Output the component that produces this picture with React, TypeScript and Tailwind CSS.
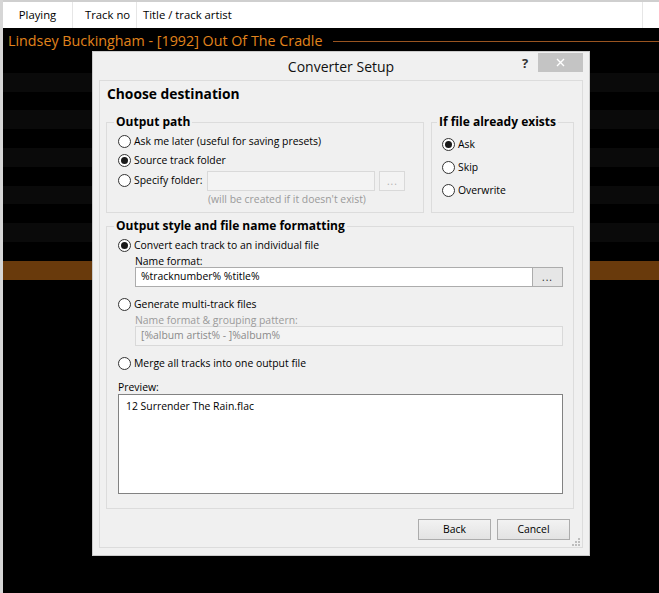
import React from 'react';

const rows = Array.from({ length: 29 }, (_, i) => i);

type RadioProps = { checked?: boolean; label: string; className?: string };

const Radio: React.FC<RadioProps> = ({ checked = false, label, className = '' }) => {
  return (
    <div className={'flex items-center ' + className}>
      <span className="flex h-[13px] w-[13px] shrink-0 items-center justify-center rounded-full border border-[#333333] bg-white">
        {checked && <span className="h-[7px] w-[7px] rounded-full bg-[#1a1a1a]" />}
      </span>
      <span className="ml-[3px] whitespace-nowrap">{label}</span>
    </div>
  );
};

const Dots: React.FC<{ disabled?: boolean }> = ({ disabled = false }) => (
  <span className={'text-[10px] leading-none tracking-[1px] ' + (disabled ? 'text-[#b0b0b0]' : 'text-[#222]')}>...</span>
);

const App: React.FC = () => {
  return (
    <div className="relative flex h-[593px] w-[659px] overflow-hidden bg-black font-['Open_Sans',sans-serif] text-black">
      {/* left window edge */}
      <div className="w-[3px] shrink-0 bg-[#d6d6d6]" />

      <div className="flex min-w-0 flex-1 flex-col">
        {/* playlist header */}
        <div className="flex h-[28px] shrink-0 border-t-2 border-[#cfcfcf] bg-white text-[11.3px]">
          <div className="flex w-[70px] items-center justify-center border-r border-[#e6e6e6]">Playing</div>
          <div className="flex w-[64px] items-center border-r border-[#e6e6e6] pl-[12px]">Track no</div>
          <div className="flex w-[506px] items-center border-r border-[#e6e6e6] pl-[6px]">Title / track artist</div>
          <div className="flex-1" />
        </div>

        {/* group title */}
        <div className="flex h-[26px] shrink-0 items-center">
          <span className="whitespace-nowrap pl-[5px] text-[14.3px] text-[#e2841c]">
            Lindsey Buckingham - [1992] Out Of The Cradle
          </span>
          <span className="ml-[11px] h-px flex-1 bg-[#9a5420]" />
        </div>

        {/* track rows */}
        {rows.map((i) => (
          <div
            key={i}
            className={
              'h-[18.8px] shrink-0 ' +
              (i === 11 ? 'bg-[#693a0c]' : i < 11 && i % 2 === 1 ? 'bg-[#0a0a0a]' : 'bg-black')
            }
          />
        ))}
      </div>

      {/* Converter Setup dialog */}
      <div className="absolute left-[92px] top-[51px] flex h-[505px] w-[498px] flex-col border border-[#cbcbcb] bg-[#f0f0f0] text-[10.4px]">
        {/* title bar */}
        <div className="flex h-[28px] shrink-0 items-start">
          <div className="w-[67px]" />
          <div className="flex-1 pt-[5px] text-center text-[14px] leading-[20px] text-[#111]">Converter Setup</div>
          <div className="flex w-[67px] items-start">
            <span className="mt-[3px] w-[16px] text-[13px] font-bold leading-[16px] text-[#333]">?</span>
            <div className="mt-[1px] flex h-[19px] w-[45px] items-center justify-center bg-[#c4c4c4]">
              <svg width="9" height="9" viewBox="0 0 9 9">
                <path d="M1 1 L8 8 M8 1 L1 8" stroke="#ffffff" strokeWidth="1.4" />
              </svg>
            </div>
          </div>
        </div>

        {/* client area */}
        <div className="relative ml-[6px] flex h-[468px] w-[484px] flex-col border border-[#dcdcdc] pl-[6px]">
          <div className="ml-[1px] mt-[3px] text-[13.8px] font-bold leading-[20px]">Choose destination</div>

          <div className="mt-[9px] flex gap-[7px]">
            <fieldset className="h-[100px] w-[318px] border border-[#dcdcdc] pl-[11px]">
              <legend className="ml-[-4px] px-[2px] text-[12px] font-bold leading-[18px]">Output path</legend>
              <div className="pt-[1px]">
                <Radio className="h-[19px]" label="Ask me later (useful for saving presets)" />
                <Radio className="h-[19px]" checked label="Source track folder" />
                <div className="flex h-[21px] items-center">
                  <Radio label="Specify folder:" />
                  <div className="ml-[5px] h-[20px] w-[168px] border border-[#d9d9d9] bg-[#f3f3f3]" />
                  <div className="ml-[4px] flex h-[20px] w-[26px] items-center justify-center border border-[#d9d9d9] bg-[#f3f3f3]">
                    <Dots disabled />
                  </div>
                </div>
                <div className="ml-[90px] leading-[16px] text-[#9a9a9a]">(will be created if it doesn't exist)</div>
              </div>
            </fieldset>

            <fieldset className="h-[100px] w-[143px] border border-[#dcdcdc] pl-[10px]">
              <legend className="ml-[-5px] px-[2px] text-[12px] font-bold leading-[18px]">If file already exists</legend>
              <div className="pt-[2px]">
                <Radio className="h-[23px]" checked label="Ask" />
                <Radio className="h-[23px]" label="Skip" />
                <Radio className="h-[23px]" label="Overwrite" />
              </div>
            </fieldset>
          </div>

          <fieldset className="mt-[4px] h-[292px] w-[468px] border border-[#dcdcdc] pl-[11px]">
            <legend className="ml-[-4px] px-[2px] text-[12px] font-bold leading-[18px]">Output style and file name formatting</legend>
            <div className="pt-[1px]">
              <Radio className="h-[19px]" checked label="Convert each track to an individual file" />
              <div className="ml-[17px] h-[12px] leading-[12px]">Name format:</div>
              <div className="ml-[17px] flex h-[20px]">
                <div className="flex h-[20px] w-[398px] items-center border border-[#acacac] bg-white pl-[5px]">
                  %tracknumber% %title%
                </div>
                <div className="flex h-[20px] w-[30px] items-center justify-center border border-l-0 border-[#acacac] bg-[#e6e6e6]">
                  <Dots />
                </div>
              </div>

              <Radio className="mt-[8px] h-[19px]" label="Generate multi-track files" />
              <div className="ml-[17px] h-[12px] leading-[12px] text-[#9a9a9a]">Name format &amp; grouping pattern:</div>
              <div className="ml-[17px] flex h-[20px] w-[428px] items-center border border-[#d9d9d9] bg-[#f3f3f3] pl-[5px] text-[#8a8a8a]">
                [%album artist% - ]%album%
              </div>

              <Radio className="mt-[8px] h-[19px]" label="Merge all tracks into one output file" />
              <div className="mt-[8px] h-[12px] leading-[12px]">Preview:</div>
              <div className="mt-[1px] h-[100px] w-[445px] border border-[#828282] bg-white pl-[7px] pt-[3px] leading-[16px]">
                12 Surrender The Rain.flac
              </div>
            </div>
          </fieldset>

          <div className="mt-[10px] flex w-[468px] justify-end gap-[6px] pr-[4px]">
            <div className="flex h-[21px] w-[73px] items-center justify-center border border-[#acacac] bg-gradient-to-b from-[#f2f2f2] to-[#e3e3e3]">
              Back
            </div>
            <div className="flex h-[21px] w-[73px] items-center justify-center border border-[#acacac] bg-gradient-to-b from-[#f2f2f2] to-[#e3e3e3]">
              Cancel
            </div>
          </div>

          {/* size grip */}
          <svg className="absolute bottom-[1px] right-[2px]" width="8" height="8" viewBox="0 0 8 8">
            <rect x="6" y="0" width="2" height="2" fill="#bdbdbd" />
            <rect x="3" y="3" width="2" height="2" fill="#bdbdbd" />
            <rect x="6" y="3" width="2" height="2" fill="#bdbdbd" />
            <rect x="0" y="6" width="2" height="2" fill="#bdbdbd" />
            <rect x="3" y="6" width="2" height="2" fill="#bdbdbd" />
            <rect x="6" y="6" width="2" height="2" fill="#bdbdbd" />
          </svg>
        </div>
      </div>
    </div>
  );
};

export default App;
